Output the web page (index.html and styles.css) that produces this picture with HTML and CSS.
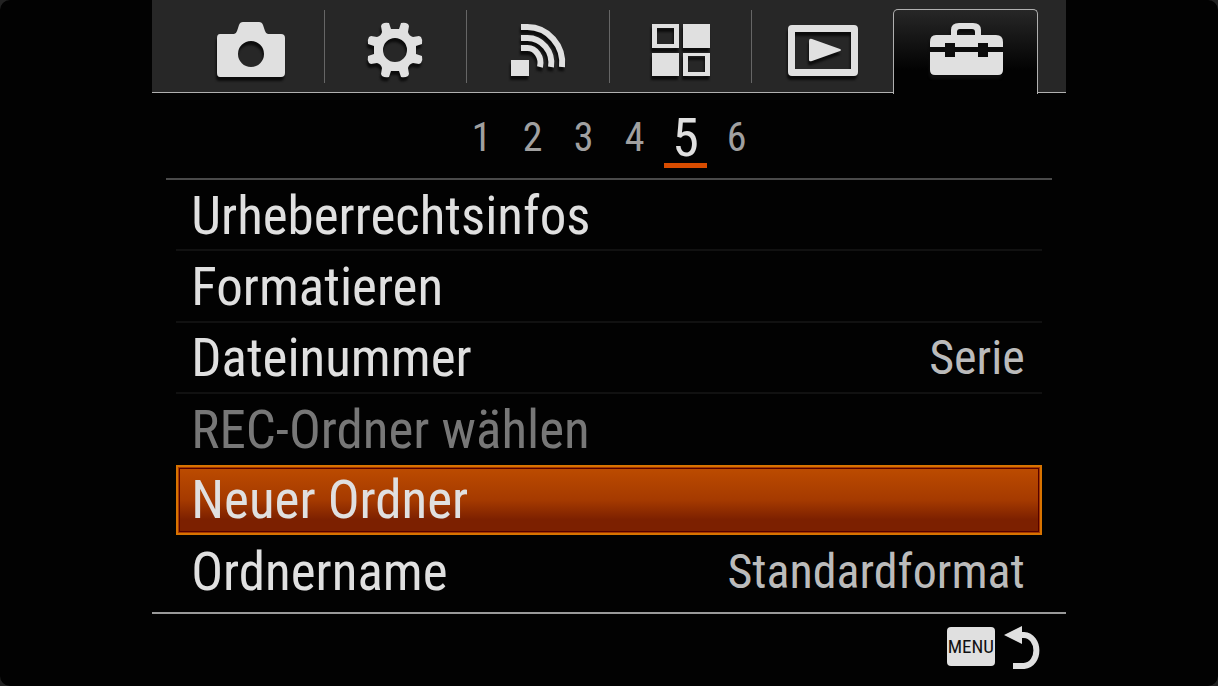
FILE: index.html
```html
<!DOCTYPE html>
<html lang="de">

<head>
    <meta charset="UTF-8">
    <meta name="viewport" content="width=device-width, initial-scale=1.0">
    <title>Setup</title>
    <link rel="stylesheet" href="styles.css">
</head>

<body>
    <div class="screen">
        <main class="menu">
            <nav class="tabs">
                <button class="tab" aria-label="Kamera">
                    <svg class="icon" width="144" height="92" viewBox="0 0 144 92">
                        <path fill-rule="evenodd" d="M39 34h14q2 0 3-3l2-6q1-3 4-3h16q3 0 4 3l2 6q1 3 3 3h13q4 0 4 4v35q0 4-4 4H39q-3 0-3-4V38q0-4 3-4zM70 41a13 13 0 1 0 0 26a13 13 0 1 0 0-26z" />
                    </svg>
                </button>
                <button class="tab" aria-label="Einstellungen">
                    <svg class="icon" width="144" height="92" viewBox="0 0 144 92">
                        <g transform="translate(71 50)">
                            <path fill-rule="evenodd" d="M-13-26Q-10-28-6-27L-4-21H4L6-27Q10-28 13-26L14-24L13-18Q14-14 18-13L24-14L26-13Q28-10 27-6L21-4V4L27 6Q28 10 26 13L24 14L18 13Q14 14 13 18L14 24L13 26Q10 28 6 27L4 21H-4L-6 27Q-10 28-13 26L-14 24L-13 18Q-14 14-18 13L-24 14L-26 13Q-28 10-27 6L-21 4V-4L-27-6Q-28-10-26-13L-24-14L-18-13Q-14-14-13-18L-14-24zM0-12a12 12 0 1 0 0 24a12 12 0 1 0 0-24z" />
                        </g>
                    </svg>
                </button>
                <button class="tab" aria-label="Drahtlos">
                    <svg class="icon" width="144" height="92" viewBox="0 0 144 92">
                        <rect x="45" y="60" width="18" height="16" />
                        <path fill="none" stroke="#e0e0e0" stroke-width="6" d="M55 27h6a35 36 0 0 1 35 40M55 38h6a24 25 0 0 1 24 29M55 48h6a13 15 0 0 1 13 19" />
                    </svg>
                </button>
                <button class="tab" aria-label="Applikation">
                    <svg class="icon" width="144" height="92" viewBox="0 0 144 92">
                        <path fill-rule="evenodd" d="M43 24h27v24H43zM48 28v16h17V28zM74 24h27v24H74zM43 53h27v23H43zM74 53h27v23H74zM79 56v16h17V56z" />
                    </svg>
                </button>
                <button class="tab" aria-label="Wiedergabe">
                    <svg class="icon" width="144" height="92" viewBox="0 0 144 92">
                        <path fill-rule="evenodd" d="M41 25h62q4 0 4 4v43q0 4-4 4H41q-4 0-4-4V29q0-4 4-4zM44 32v37h56V32zM58 41q0-3 3-2l28 10q2 1 0 2L61 61q-3 1-3-1z" />
                    </svg>
                </button>
                <button class="tab active" aria-label="Setup" aria-current="true">
                    <svg class="icon" width="144" height="82" viewBox="0 0 144 82">
                        <path fill-rule="evenodd" d="M42 25h15V20q0-7 8-7h14q8 0 8 7v5h15q7 0 7 7v5H94V33H84v4H61V33H51v4H36V32q0-7 6-7zM63 25h18v-3q0-3-3-3H66q-3 0-3 3z" />
                        <path d="M36 42h15v5h10v-5h23v5h10v-5h15v18q0 5-5 5H41q-5 0-5-5z" />
                    </svg>
                </button>
            </nav>
            <nav class="pages">
                <button class="page">1</button>
                <button class="page">2</button>
                <button class="page">3</button>
                <button class="page">4</button>
                <button class="page current" aria-current="page">5</button>
                <button class="page">6</button>
            </nav>
            <div class="list">
                <button class="row"><span>Urheberrechtsinfos</span></button>
                <button class="row"><span>Formatieren</span></button>
                <button class="row"><span>Dateinummer</span><span class="value">Serie</span></button>
                <button class="row" disabled><span>REC-Ordner wählen</span></button>
                <button class="row selected"><span>Neuer Ordner</span></button>
                <button class="row"><span>Ordnername</span><span class="value">Standardformat</span></button>
            </div>
            <footer class="footer">
                <button class="back">
                    <span class="key">MENU</span>
                    <svg width="36" height="44" viewBox="0 0 36 44">
                        <path fill="#e0e0e0" d="M0 10L18 1v18z" />
                        <path fill="none" stroke="#e0e0e0" stroke-width="6" d="M17 10h3c16 1 17 29 0 31H9" />
                    </svg>
                </button>
            </footer>
        </main>
    </div>
</body>

</html>
```
FILE: styles.css
```css
* {
    box-sizing: border-box;
}

html {
    background-color: #222;
}

body {
    margin: 0;
    font-family: "Roboto Condensed", Roboto, "Liberation Sans", sans-serif;
    color: #e0e0e0;
}

button {
    padding: 0;
    border: none;
    background: none;
    color: inherit;
    font: inherit;
    cursor: pointer;
}

.screen {
    display: flex;
    justify-content: center;
    min-height: 100vh;
    background-color: #020202;
    border-radius: 10px;
}

.menu {
    display: flex;
    flex-direction: column;
    width: 75%;
}

.tabs {
    display: flex;
    height: 93px;
    padding: 0 28px 0 30px;
    background-color: #272727;
    border-bottom: 1px solid #b0b0b0;
}

.tab {
    display: flex;
    flex: 1;
    justify-content: center;
    min-width: 0;
}

.tab:nth-child(-n+4) {
    background: linear-gradient(#666, #666) right 10px / 1px 73px no-repeat;
}

.tab.active {
    height: 85px;
    margin: 9px 0 0 -1px;
    background: linear-gradient(#272727, #020202 60px);
    border: 1px solid #b0b0b0;
    border-bottom: none;
    border-radius: 5px 5px 0 0;
}

.icon {
    flex: none;
    fill: #e0e0e0;
    filter: drop-shadow(-1px 4px 1px #0c0c0c);
}

.pages {
    display: flex;
    justify-content: center;
    height: 87px;
    margin: 0 14px;
    padding-top: 15px;
    border-bottom: 2px solid #4a4a4a;
}

.page {
    width: 43px;
    height: 60px;
    margin: 0 4px;
    color: #a0a0a0;
    font-size: 40px;
    line-height: 60px;
}

.page.current {
    border-bottom: 5px solid #d84c00;
    color: #e0e0e0;
    font-size: 54px;
}

.list {
    display: grid;
    flex: 1;
    grid-auto-rows: 1fr;
    padding: 0 24px;
}

.row {
    display: flex;
    align-items: center;
    justify-content: space-between;
    padding: 2px 17px 0 15px;
    border-bottom: 2px solid #111;
    font-size: 53px;
    line-height: 64px;
    text-align: left;
    white-space: nowrap;
}

.row:disabled {
    border-color: transparent;
    color: #777;
}

.row:last-child {
    border-color: transparent;
}

.row.selected {
    margin-bottom: 2px;
    padding: 0 15px 0 13px;
    background: linear-gradient(#bd4c00, #a53a00 50%, #7c2000 80%);
    border: 2px solid #d87300;
    box-shadow: inset 0 0 0 1px #a53a00, inset 0 0 0 2px #500;
}

.value {
    color: #bbb;
    font-size: 48px;
}

.footer {
    display: flex;
    justify-content: flex-end;
    height: 74px;
    margin-top: 4px;
    padding: 11px 26px 0 0;
    border-top: 2px solid #999;
}

.back {
    display: flex;
    align-items: flex-start;
    gap: 9px;
    height: 44px;
}

.key {
    width: 48px;
    height: 39px;
    margin-top: 2px;
    border-radius: 4px;
    background-color: #e0e0e0;
    color: #111;
    font-size: 19px;
    line-height: 40px;
    text-align: center;
}
```
